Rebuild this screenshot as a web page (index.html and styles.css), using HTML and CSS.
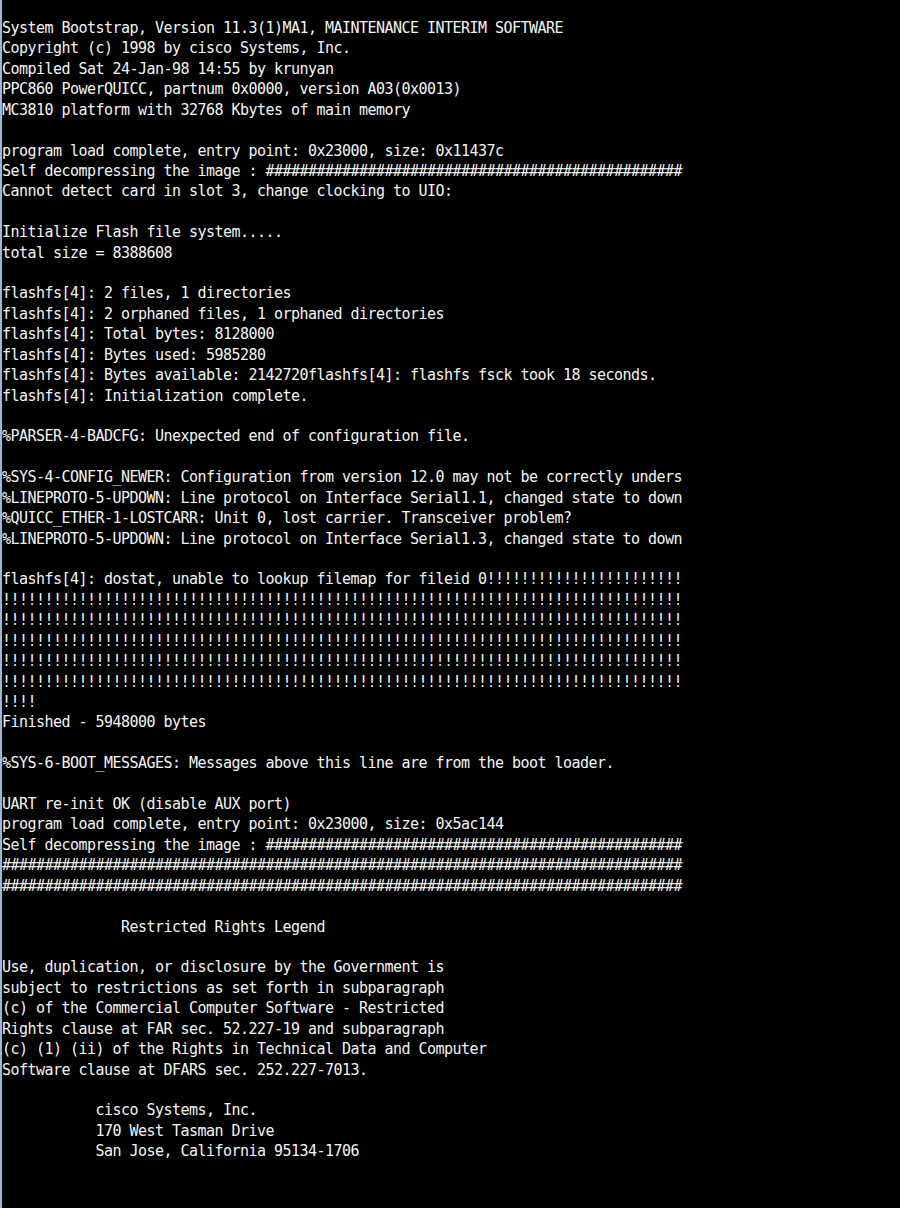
FILE: index.html
```html
<!DOCTYPE html>
<html lang="en">
<head>
    <meta charset="UTF-8">
    <meta name="viewport" content="width=device-width, initial-scale=1.0">
    <title>Console - Boot Log</title>
    <link rel="stylesheet" href="styles.css">
</head>
<body>
    <div class="console-window">
<pre class="console-output">System Bootstrap, Version 11.3(1)MA1, MAINTENANCE INTERIM SOFTWARE
Copyright (c) 1998 by cisco Systems, Inc.
Compiled Sat 24-Jan-98 14:55 by krunyan
PPC860 PowerQUICC, partnum 0x0000, version A03(0x0013)
MC3810 platform with 32768 Kbytes of main memory

program load complete, entry point: 0x23000, size: 0x11437c
Self decompressing the image : #################################################
Cannot detect card in slot 3, change clocking to UIO:

Initialize Flash file system.....
total size = 8388608

flashfs[4]: 2 files, 1 directories
flashfs[4]: 2 orphaned files, 1 orphaned directories
flashfs[4]: Total bytes: 8128000
flashfs[4]: Bytes used: 5985280
flashfs[4]: Bytes available: 2142720flashfs[4]: flashfs fsck took 18 seconds.
flashfs[4]: Initialization complete.

%PARSER-4-BADCFG: Unexpected end of configuration file.

%SYS-4-CONFIG_NEWER: Configuration from version 12.0 may not be correctly unders
%LINEPROTO-5-UPDOWN: Line protocol on Interface Serial1.1, changed state to down
%QUICC_ETHER-1-LOSTCARR: Unit 0, lost carrier. Transceiver problem?
%LINEPROTO-5-UPDOWN: Line protocol on Interface Serial1.3, changed state to down

flashfs[4]: dostat, unable to lookup filemap for fileid 0!!!!!!!!!!!!!!!!!!!!!!!
!!!!!!!!!!!!!!!!!!!!!!!!!!!!!!!!!!!!!!!!!!!!!!!!!!!!!!!!!!!!!!!!!!!!!!!!!!!!!!!!
!!!!!!!!!!!!!!!!!!!!!!!!!!!!!!!!!!!!!!!!!!!!!!!!!!!!!!!!!!!!!!!!!!!!!!!!!!!!!!!!
!!!!!!!!!!!!!!!!!!!!!!!!!!!!!!!!!!!!!!!!!!!!!!!!!!!!!!!!!!!!!!!!!!!!!!!!!!!!!!!!
!!!!!!!!!!!!!!!!!!!!!!!!!!!!!!!!!!!!!!!!!!!!!!!!!!!!!!!!!!!!!!!!!!!!!!!!!!!!!!!!
!!!!!!!!!!!!!!!!!!!!!!!!!!!!!!!!!!!!!!!!!!!!!!!!!!!!!!!!!!!!!!!!!!!!!!!!!!!!!!!!
!!!!
Finished - 5948000 bytes

%SYS-6-BOOT_MESSAGES: Messages above this line are from the boot loader.

UART re-init OK (disable AUX port)
program load complete, entry point: 0x23000, size: 0x5ac144
Self decompressing the image : #################################################
################################################################################
################################################################################

              Restricted Rights Legend

Use, duplication, or disclosure by the Government is
subject to restrictions as set forth in subparagraph
(c) of the Commercial Computer Software - Restricted
Rights clause at FAR sec. 52.227-19 and subparagraph
(c) (1) (ii) of the Rights in Technical Data and Computer
Software clause at DFARS sec. 252.227-7013.

           cisco Systems, Inc.
           170 West Tasman Drive
           San Jose, California 95134-1706</pre>
    </div>
</body>
</html>
```

FILE: styles.css
```css
* {
    margin: 0;
    padding: 0;
    box-sizing: border-box;
}

html, body {
    background-color: #000;
}

body {
    min-height: 100vh;
}

/* 콘솔 창 */
.console-window {
    min-height: 1208px;
    border-left: 2px solid #9fb6d2;
    background-color: #000;
}

.console-output {
    font-family: 'DejaVu Sans Mono', 'Liberation Mono', monospace;
    font-size: 15px;
    letter-spacing: -0.53px;
    line-height: 20.42px;
    color: #f4f4f4;
    padding-top: 18px;
    white-space: pre;
}
```
